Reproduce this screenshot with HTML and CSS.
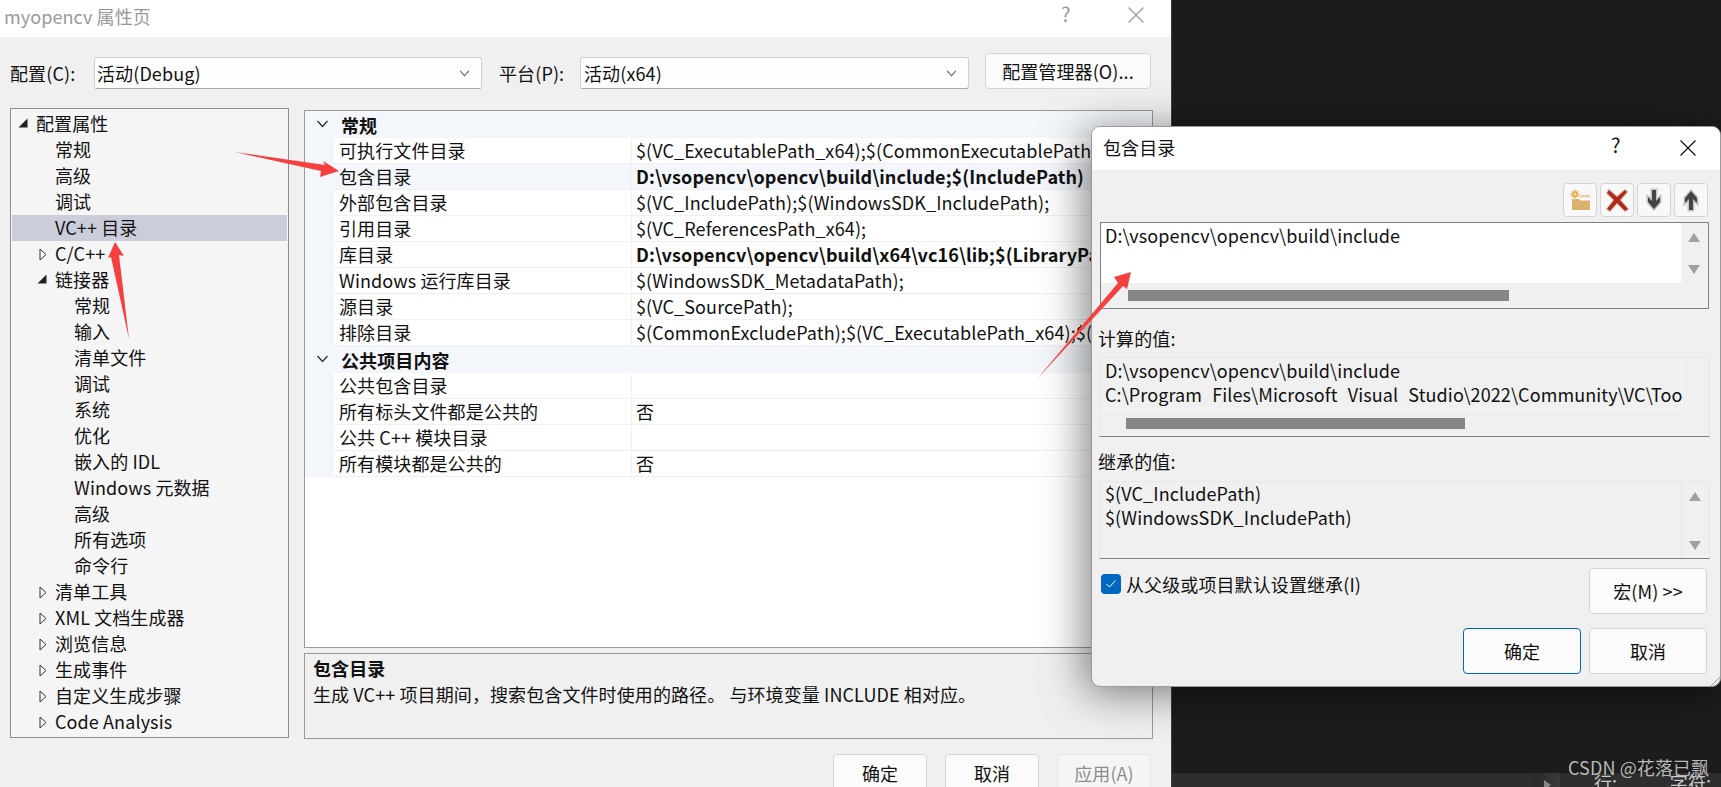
FILE: index.html
```html
<!DOCTYPE html>
<html lang="zh-CN">
<head>
    <meta charset="UTF-8">
    <title>myopencv 属性页</title>
    <link rel="stylesheet" href="styles.css">
</head>
<body>

    <!-- shared glyphs -->
    <svg class="defs" width="0" height="0">
        <symbol id="tri-open" viewBox="0 0 10 10"><path d="M9.5 0.5V9.5H0.5Z" fill="#222"/></symbol>
        <symbol id="tri-closed" viewBox="0 0 8 13"><path d="M1 1L7 6.5L1 12Z" fill="none" stroke="#333" stroke-width="1"/></symbol>
        <symbol id="chevron" viewBox="0 0 12 8"><path d="M1 1L6 6.5L11 1" fill="none" stroke="currentColor" stroke-width="1.3"/></symbol>
        <symbol id="close" viewBox="0 0 16 16"><path d="M0.5 0.5L15.5 15.5M15.5 0.5L0.5 15.5" fill="none" stroke="currentColor" stroke-width="1.2"/></symbol>
    </svg>

    <!-- Property pages window -->
    <div class="window main-window">
        <div class="title-bar">
            <span class="title-text dim">myopencv 属性页</span>
            <span class="help dim">?</span>
            <svg class="close-icon dim"><use href="#close"/></svg>
        </div>

        <div class="config-row">
            <label class="config-label first">配置(C):</label>
            <div class="combo combo-config"><span>活动(Debug)</span><svg class="combo-arrow"><use href="#chevron"/></svg></div>
            <label class="config-label second">平台(P):</label>
            <div class="combo combo-platform"><span>活动(x64)</span><svg class="combo-arrow"><use href="#chevron"/></svg></div>
            <button class="btn manager-btn">配置管理器(O)...</button>
        </div>

        <div class="panes">
            <ul class="tree">
                <li class="lv0"><svg class="tri tri-o"><use href="#tri-open"/></svg>配置属性</li>
                <li class="lv1">常规</li>
                <li class="lv1">高级</li>
                <li class="lv1">调试</li>
                <li class="lv1 selected">VC++ 目录</li>
                <li class="lv1"><svg class="tri tri-c"><use href="#tri-closed"/></svg>C/C++</li>
                <li class="lv1"><svg class="tri tri-o"><use href="#tri-open"/></svg>链接器</li>
                <li class="lv2">常规</li>
                <li class="lv2">输入</li>
                <li class="lv2">清单文件</li>
                <li class="lv2">调试</li>
                <li class="lv2">系统</li>
                <li class="lv2">优化</li>
                <li class="lv2">嵌入的 IDL</li>
                <li class="lv2">Windows 元数据</li>
                <li class="lv2">高级</li>
                <li class="lv2">所有选项</li>
                <li class="lv2">命令行</li>
                <li class="lv1"><svg class="tri tri-c"><use href="#tri-closed"/></svg>清单工具</li>
                <li class="lv1"><svg class="tri tri-c"><use href="#tri-closed"/></svg>XML 文档生成器</li>
                <li class="lv1"><svg class="tri tri-c"><use href="#tri-closed"/></svg>浏览信息</li>
                <li class="lv1"><svg class="tri tri-c"><use href="#tri-closed"/></svg>生成事件</li>
                <li class="lv1"><svg class="tri tri-c"><use href="#tri-closed"/></svg>自定义生成步骤</li>
                <li class="lv1"><svg class="tri tri-c"><use href="#tri-closed"/></svg>Code Analysis</li>
            </ul>

            <div class="right-col">
                <div class="props">
                    <div class="prop-group">
                        <div class="group-head"><svg class="group-arrow"><use href="#chevron"/></svg>常规</div>
                        <div class="prop-row"><span class="prop-name">可执行文件目录</span><span class="prop-value">$(VC_ExecutablePath_x64);$(CommonExecutablePath);$(VS_ExecutablePath)</span></div>
                        <div class="prop-row active"><span class="prop-name">包含目录</span><span class="prop-value strong">D:\vsopencv\opencv\build\include;$(IncludePath)</span></div>
                        <div class="prop-row"><span class="prop-name">外部包含目录</span><span class="prop-value">$(VC_IncludePath);$(WindowsSDK_IncludePath);</span></div>
                        <div class="prop-row"><span class="prop-name">引用目录</span><span class="prop-value">$(VC_ReferencesPath_x64);</span></div>
                        <div class="prop-row"><span class="prop-name">库目录</span><span class="prop-value strong">D:\vsopencv\opencv\build\x64\vc16\lib;$(LibraryPath)</span></div>
                        <div class="prop-row"><span class="prop-name">Windows 运行库目录</span><span class="prop-value">$(WindowsSDK_MetadataPath);</span></div>
                        <div class="prop-row"><span class="prop-name">源目录</span><span class="prop-value">$(VC_SourcePath);</span></div>
                        <div class="prop-row"><span class="prop-name">排除目录</span><span class="prop-value">$(CommonExcludePath);$(VC_ExecutablePath_x64);$(VC_LibraryPath)</span></div>
                    </div>
                    <div class="prop-group">
                        <div class="group-head"><svg class="group-arrow"><use href="#chevron"/></svg>公共项目内容</div>
                        <div class="prop-row"><span class="prop-name">公共包含目录</span><span class="prop-value"></span></div>
                        <div class="prop-row"><span class="prop-name">所有标头文件都是公共的</span><span class="prop-value">否</span></div>
                        <div class="prop-row"><span class="prop-name">公共 C++ 模块目录</span><span class="prop-value"></span></div>
                        <div class="prop-row"><span class="prop-name">所有模块都是公共的</span><span class="prop-value">否</span></div>
                    </div>
                </div>
                <div class="desc">
                    <h4>包含目录</h4>
                    <p>生成 VC++ 项目期间，搜索包含文件时使用的路径。 与环境变量 INCLUDE 相对应。</p>
                </div>
            </div>
        </div>

        <div class="main-footer">
            <button class="btn">确定</button>
            <button class="btn">取消</button>
            <button class="btn disabled">应用(A)</button>
        </div>
    </div>

    <!-- Editor behind the dialogs -->
    <div class="backdrop">
        <div class="status-bar"><span class="status-arrow"></span><span class="status-line">行: 21</span><span>字符: 3</span></div>
    </div>

    <!-- Include directories dialog -->
    <div class="window dialog">
        <div class="title-bar dialog-title">
            <span class="title-text">包含目录</span>
            <span class="help">?</span>
            <svg class="close-icon"><use href="#close"/></svg>
        </div>
        <div class="dialog-body">
            <div class="toolbar">
                <button class="tool-btn">
                    <svg width="24" height="24" viewBox="0 0 24 24">
                        <path d="M3 9H10L12 11H23V23H3Z" fill="#fff" opacity=".8"/>
                        <path d="M4 11H11L12.5 12.5H22V22H4Z" fill="#dcb06e"/>
                        <path d="M11 7H22V9.5H12Z" fill="#e9cfa4"/>
                        <path d="M7 1L8.2 3.6L10.8 2.4L9.8 5.2L12.6 6.2L9.8 7.3L10.8 10L8.2 8.8L7 11.4L5.8 8.8L3.2 10L4.2 7.3L1.4 6.2L4.2 5.2L3.2 2.4L5.8 3.6Z" fill="#e3a24a" stroke="#fbe7c4" stroke-width=".6"/>
                        <circle cx="7" cy="6.2" r="1.6" fill="#f7d9a2"/>
                    </svg>
                </button>
                <button class="tool-btn">
                    <svg width="26" height="26" viewBox="0 0 26 26">
                        <path d="M5 3L13 10L21 3L23 5L16 13L24 22L21 24L13 16L6 24L3 22L10 13L3 6Z" fill="#b22a16" stroke="#d8d0cc" stroke-width="2.4" paint-order="stroke"/>
                    </svg>
                </button>
                <button class="tool-btn">
                    <svg width="20" height="26" viewBox="0 0 20 26">
                        <path d="M8 3H12V14L16 10V15L10 22L4 15V10L8 14Z" fill="#444" stroke="#c4c4c4" stroke-width="3" paint-order="stroke"/>
                    </svg>
                </button>
                <button class="tool-btn">
                    <svg width="20" height="26" viewBox="0 0 20 26">
                        <path d="M8 23H12V12L16 16V11L10 4L4 11V16L8 12Z" fill="#444" stroke="#c4c4c4" stroke-width="3" paint-order="stroke"/>
                    </svg>
                </button>
            </div>

            <div class="list-box edit-box">
                <div class="list-text"><div>D:\vsopencv\opencv\build\include</div></div>
                <div class="vscroll"><i class="up"></i><i class="down"></i></div>
                <div class="hscroll"><i class="thumb thumb-edit"></i></div>
            </div>

            <div class="box-label computed-label">计算的值:</div>
            <div class="list-box computed-box">
                <div class="list-text">
                    <div>D:\vsopencv\opencv\build\include</div>
                    <div>C:\Program Files\Microsoft Visual Studio\2022\Community\VC\Tools\MSVC</div>
                </div>
                <div class="vscroll"></div>
                <div class="hscroll"><i class="thumb thumb-computed"></i></div>
            </div>

            <div class="box-label inherited-label">继承的值:</div>
            <div class="list-box inherited-box">
                <div class="list-text">
                    <div>$(VC_IncludePath)</div>
                    <div>$(WindowsSDK_IncludePath)</div>
                </div>
                <div class="vscroll"><i class="up"></i><i class="down"></i></div>
            </div>

            <div class="inherit-row">
                <label class="check">
                    <span class="check-box"><svg width="12" height="10" viewBox="0 0 12 10"><path d="M1.5 5L4.5 8L10.5 1.5" fill="none" stroke="#fff" stroke-width="1"/></svg></span>
                    从父级或项目默认设置继承(I)
                </label>
                <button class="btn dialog-btn">宏(M) &gt;&gt;</button>
            </div>
            <div class="dialog-footer">
                <button class="btn dialog-btn default">确定</button>
                <button class="btn dialog-btn">取消</button>
            </div>
        </div>
        <svg class="grip" width="12" height="12" viewBox="0 0 12 12"><path d="M12 3L3 12M12 7L7 12" stroke="#9a9a9a" stroke-width="1"/></svg>
    </div>

    <!-- Red annotation arrows drawn over the screenshot -->
    <svg class="annotations" width="1721" height="787" viewBox="0 0 1721 787">
        <path d="M235 152L325 165L323 161L339 171L320 177L321 171Z"/>
        <path d="M129 339L111 257L108 258L115 242L124 256L119 255Z"/>
        <path d="M1037 379L1118 283L1114 277L1131 272L1127 289L1123 286Z"/>
    </svg>

    <div class="watermark">CSDN @花落已飘</div>

</body>
</html>
```

FILE: styles.css
```css
html, body {
    margin: 0;
    padding: 0;
    height: 787px;
    overflow: hidden;
}
body {
    position: relative;
    background-color: #1c1c1c;
    color: #111;
    font-family: "Noto Sans CJK SC", "Noto Sans", sans-serif;
    font-size: 18px;
    line-height: 24px;
    letter-spacing: .1px;
}
.defs {
    position: absolute;
}
.window {
    position: absolute;
    box-sizing: border-box;
    background-color: #f0f0f0;
}
button {
    font: inherit;
    color: inherit;
    letter-spacing: inherit;
    padding: 0;
}

/* Title bars */
.title-bar {
    display: flex;
    align-items: center;
    box-sizing: border-box;
    height: 37px;
    padding-bottom: 6px;
    background-color: #fff;
    position: relative;
    flex: none;
}
.title-text {
    margin-left: 4px;
}
.dim {
    color: #999;
}
.help {
    position: absolute;
    left: 1061px;
    top: 2px;
    font-size: 20px;
}
.close-icon {
    position: absolute;
    left: 1128px;
    top: 7px;
    width: 16px;
    height: 16px;
}

/* Main window */
.main-window {
    left: 0;
    top: 0;
    width: 1171px;
    height: 787px;
    display: flex;
    flex-direction: column;
    overflow: hidden;
}
.config-row {
    display: flex;
    align-items: flex-start;
    height: 71px;
    box-sizing: border-box;
    padding: 16px 0 0 10px;
    flex: none;
}
.config-label {
    margin-top: 8px;
    width: 84px;
}
.config-label.second {
    margin-left: 17px;
    width: 81px;
}
.combo {
    box-sizing: border-box;
    display: flex;
    align-items: center;
    justify-content: space-between;
    margin-top: 4px;
    height: 32px;
    padding: 0 11px 0 3px;
    background-color: #fdfdfd;
    border: 1px solid #d0d0d0;
    border-bottom-color: #a8a8a8;
    border-radius: 3px;
}
.combo-config {
    width: 388px;
    padding-left: 2px;
}
.combo-platform {
    width: 389px;
}
.combo-arrow {
    width: 11px;
    height: 7px;
    color: #666;
}
.btn {
    box-sizing: border-box;
    width: 94px;
    height: 38px;
    background-color: #fbfbfb;
    border: 1px solid #d4d4d4;
    border-radius: 4px;
}
.btn.disabled {
    color: #8c8c8c;
    background-color: #f5f5f5;
    border-color: #e6e6e6;
}
.manager-btn {
    margin-left: 16px;
    width: 166px;
    height: 36px;
}

/* Category tree */
.panes {
    display: flex;
    align-items: flex-start;
    padding-left: 10px;
    flex: none;
}
.tree {
    box-sizing: border-box;
    width: 279px;
    height: 630px;
    margin: 0;
    padding: 2px 1px;
    list-style-type: none;
    background-color: #f5f5f5;
    border: 1px solid #8e8e96;
}
.tree li {
    position: relative;
    height: 26px;
    white-space: nowrap;
}
.lv0 {
    padding-left: 24px;
}
.lv1 {
    padding-left: 43px;
}
.lv2 {
    padding-left: 62px;
}
.selected {
    background-color: #cbcdda;
}
.tri {
    position: absolute;
}
.tri-o {
    width: 10px;
    height: 10px;
    top: 7px;
    margin-left: -18px;
}
.tri-c {
    width: 8px;
    height: 13px;
    top: 7px;
    margin-left: -16px;
}

/* Property grid */
.right-col {
    width: 849px;
    margin-left: 15px;
    margin-top: 2px;
}
.props {
    box-sizing: border-box;
    height: 538px;
    background-color: #fff;
    border: 1px solid #9a9a9a;
    overflow: hidden;
}
.prop-group {
    background-color: #f3f6fb;
}
.group-head {
    position: relative;
    height: 27px;
    padding-left: 36px;
    font-weight: bold;
    line-height: 28px;
}
.group-arrow {
    position: absolute;
    left: 11px;
    top: 9px;
    width: 13px;
    height: 8px;
    color: #333;
}
.prop-row {
    display: grid;
    grid-template-columns: 297px 1fr;
    box-sizing: border-box;
    height: 26px;
    margin-left: 29px;
    background-color: #fff;
    border-bottom: 1px solid #f0f0f0;
    white-space: nowrap;
    overflow: hidden;
}
.prop-row.active {
    background-color: #f3f6fb;
}
.prop-name {
    padding-left: 5px;
}
.prop-value {
    padding-left: 4px;
    border-left: 1px solid #f0f0f0;
    overflow: hidden;
}
.strong {
    font-weight: bold;
}
.desc {
    box-sizing: border-box;
    height: 86px;
    margin-top: 5px;
    padding: 1px 8px;
    line-height: 26px;
    border: 1px solid #9a9a9a;
}
.desc h4, .desc p {
    margin: 0;
    font-size: inherit;
}
.main-footer {
    display: flex;
    justify-content: flex-end;
    gap: 18px;
    margin-top: 15px;
    padding-right: 20px;
}

/* Editor in the background */
.backdrop {
    box-sizing: border-box;
    position: absolute;
    left: 1171px;
    top: 0;
    width: 550px;
    height: 787px;
    border-left: 1px solid #3f3f3f;
    display: flex;
    flex-direction: column;
    justify-content: flex-end;
}
.status-bar {
    display: flex;
    height: 14px;
    padding-left: 422px;
    background-color: #2e2e2e;
    color: #c8c8c8;
    line-height: 18px;
    overflow: hidden;
    position: relative;
}
.status-line {
    margin-right: 32px;
}
.status-arrow {
    position: absolute;
    left: 362px;
    top: 0;
    width: 26px;
    height: 14px;
    background: linear-gradient(90deg, #2a2a2a, #3a3a3a);
}
.status-arrow::after {
    content: "";
    position: absolute;
    left: 10px;
    top: 7px;
    border: 5px solid transparent;
    border-left: 7px solid #888;
    border-right: none;
}

/* Include directories dialog */
.dialog {
    left: 1091px;
    top: 126px;
    width: 630px;
    height: 561px;
    display: flex;
    flex-direction: column;
    border: 1px solid #9a9a9a;
    border-radius: 9px;
    overflow: hidden;
    box-shadow: -6px 6px 44px rgba(0, 0, 0, .5);
}
.dialog-title {
    height: 43px;
    padding-bottom: 3px;
}
.dialog-title .title-text {
    margin-left: 11px;
}
.dialog-title .help {
    left: 519px;
    top: 6px;
}
.dialog-title .close-icon {
    left: 588px;
    top: 13px;
}
.dialog-body {
    display: flex;
    flex-direction: column;
    padding: 13px 11px 0 8px;
}
.toolbar {
    display: flex;
    justify-content: flex-end;
    gap: 3px;
    padding-right: 1px;
}
.tool-btn {
    display: flex;
    align-items: center;
    justify-content: center;
    box-sizing: border-box;
    width: 34px;
    height: 34px;
    background-color: #f8f8f8;
    border: 1px solid #d4d4d4;
    border-radius: 4px;
}
.list-box {
    display: grid;
    grid-template-columns: 1fr 27px;
    box-sizing: border-box;
    line-height: 24px;
    white-space: nowrap;
}
.list-text {
    overflow: hidden;
    padding: 0 0 0 4px;
}
.vscroll {
    position: relative;
}
.vscroll .up, .vscroll .down {
    position: absolute;
    left: 7px;
    border: 6px solid transparent;
    border-top: none;
    border-bottom: 9px solid #a0a0a0;
}
.vscroll .down {
    border-bottom: none;
    border-top: 9px solid #a0a0a0;
}
.hscroll {
    grid-column: 1 / 3;
    display: flex;
    align-items: center;
}
.thumb {
    display: block;
    height: 11px;
    background-color: #868686;
}
.edit-box {
    height: 87px;
    margin-top: 5px;
    grid-template-rows: 60px 1fr;
    border: 1px solid #80808a;
}
.edit-box .list-text {
    background-color: #fff;
}
.edit-box .up {
    top: 10px;
}
.edit-box .down {
    top: 42px;
}
.thumb-edit {
    width: 381px;
    margin-left: 27px;
}
.box-label {
    height: 24px;
    line-height: 22px;
    margin-left: -2px;
}
.computed-label {
    margin-top: 18px;
    margin-bottom: 6px;
}
.inherited-label {
    margin-top: 13px;
    margin-bottom: 7px;
}
.computed-box, .inherited-box {
    margin-left: -1px;
    margin-right: -1px;
    border: 1px solid #e8e8e8;
    border-bottom-color: #808080;
}
.computed-box {
    height: 80px;
    grid-template-rows: 52px 1fr;
    word-spacing: 6px;
}
.computed-box .list-text {
    box-shadow: inset 0 -1px #fafafa, inset -1px 0 #fafafa;
    padding-left: 5px;
}
.thumb-computed {
    width: 339px;
    margin-left: 26px;
}
.inherited-box {
    height: 78px;
}
.inherited-box .list-text {
    margin-top: -1px;
    padding-left: 5px;
    border-right: 1px solid #e6e6e6;
}
.inherited-box .up {
    top: 10px;
}
.inherited-box .down {
    top: 59px;
}
.inherit-row {
    display: flex;
    justify-content: space-between;
    align-items: flex-start;
    margin-top: 9px;
    padding-right: 2px;
}
.check {
    display: flex;
    align-items: center;
    gap: 5px;
    margin: 4px 0 0 1px;
}
.check-box {
    display: flex;
    align-items: center;
    justify-content: center;
    width: 20px;
    height: 20px;
    background-color: #0067c0;
    border-radius: 4px;
}
.dialog-btn {
    width: 118px;
    height: 46px;
}
.dialog-footer {
    display: flex;
    justify-content: flex-end;
    gap: 8px;
    margin-top: 14px;
    padding-right: 2px;
}
.default {
    border: 1.5px solid #0067c0;
}
.grip {
    position: absolute;
    right: 0;
    bottom: 0;
}

/* Overlays */
.annotations {
    position: absolute;
    left: 0;
    top: 0;
    fill: #f63f3f;
}
.watermark {
    position: absolute;
    left: 1568px;
    top: 755px;
    color: #b8b8b8;
    white-space: nowrap;
}
```
